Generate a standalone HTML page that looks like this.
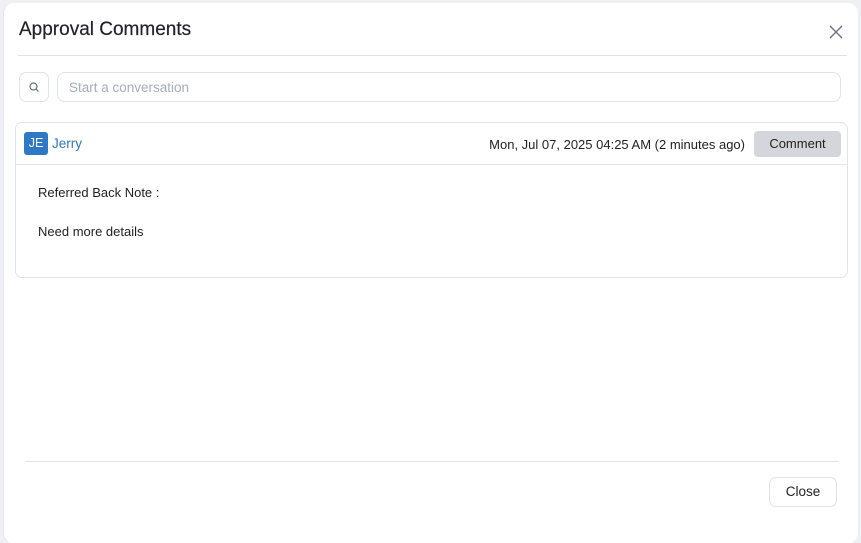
<!DOCTYPE html>
<html><head><meta charset="utf-8"><style>
*{box-sizing:border-box;margin:0;padding:0}
body{width:861px;height:522px;background:#eef0f3;font-family:"Liberation Sans",sans-serif;position:relative;overflow:hidden}
.modal{position:absolute;left:3px;top:3px;width:855px;height:540px;background:#fff;border-radius:10px;border-left:1px solid #e3e6ea}
.title{position:absolute;left:15px;top:16px;font-size:19px;color:#1f2328;-webkit-text-stroke:0.2px #1f2328}
.x{position:absolute;left:825px;top:22px}
.hr{position:absolute;left:14px;width:829px;height:1px;background:#dfe3e9}
.sbtn{position:absolute;left:15px;top:69px;width:30px;height:30px;border:1px solid #dfe3ea;border-radius:7px}
.inp{position:absolute;left:53px;top:69px;width:784px;height:30px;border:1px solid #dfe3ea;border-radius:8px;font-size:13.5px;color:#a4adbb;padding:7px 11px}
.card{position:absolute;left:11px;top:119px;width:833px;height:156px;border:1px solid #dfe3ea;border-radius:7px}
.chead{height:42px;border-bottom:1px solid #dfe3ea;position:relative}
.av{position:absolute;left:8px;top:9px;width:24px;height:23px;background:#2f78c4;border-radius:3px;color:#fff;font-size:12.5px;text-align:center;line-height:23px}
.name{position:absolute;left:36px;top:13px;color:#2f78c4;font-size:13.5px}
.date{position:absolute;right:102px;top:14px;font-size:13px;color:#222}
.cbtn{position:absolute;right:6px;top:8px;width:87px;height:26px;background:#d3d6da;border-radius:4px;font-size:13px;color:#222;text-align:center;line-height:26px}
.body{padding:20px 22px;font-size:13px;color:#222}
.close{position:absolute;left:765px;top:474px;width:68px;height:30px;border:1px solid #dfe3ea;border-radius:7px;font-size:13.5px;color:#222;text-align:center;line-height:28px}
</style></head><body>
<div class="modal">
<div class="title">Approval Comments</div>
<svg class="x" width="14" height="14" viewBox="0 0 14 14"><path d="M1 1L13 13M13 1L1 13" stroke="#6b7280" stroke-width="1.4"/></svg>
<div class="hr" style="top:52px"></div>
<div class="sbtn"><svg width="28" height="28" viewBox="0 0 28 28"><circle cx="13.5" cy="13.5" r="3.5" fill="none" stroke="#6b7280" stroke-width="1.2"/><path d="M16 16L18.5 18.5" stroke="#6b7280" stroke-width="1.2"/></svg></div>
<div class="inp">Start a conversation</div>
<div class="card">
<div class="chead"><div class="av">JE</div><div class="name">Jerry</div><div class="date">Mon, Jul 07, 2025 04:25 AM (2 minutes ago)</div><div class="cbtn">Comment</div></div>
<div class="body"><div>Referred Back Note :</div><div style="margin-top:24px">Need more details</div></div>
</div>
<div class="hr" style="top:458px;left:21px;width:814px"></div>
<div class="close">Close</div>
</div>
</body></html>
